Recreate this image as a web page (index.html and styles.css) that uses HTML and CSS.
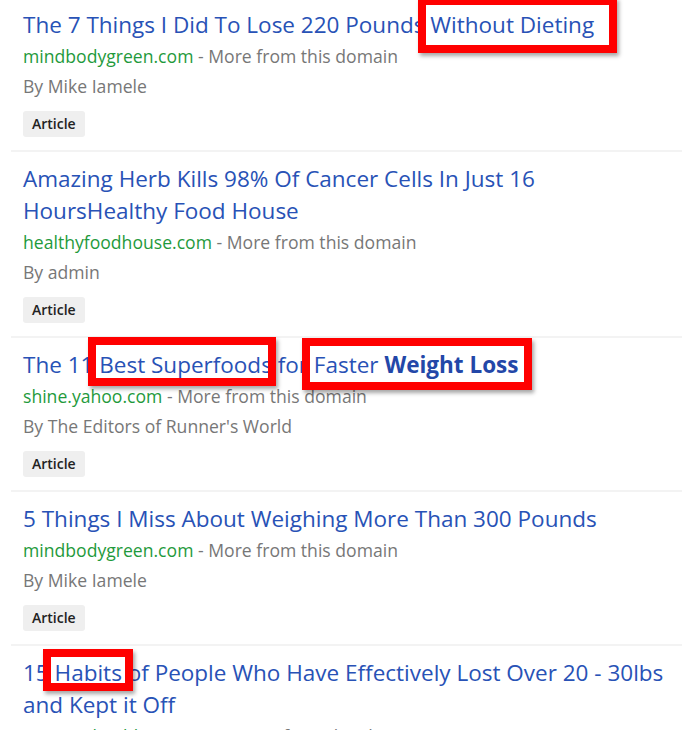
FILE: index.html
```html
<!DOCTYPE html>
<html>
<head>
<meta charset="utf-8">
<link rel="stylesheet" href="styles.css">
</head>
<body>
<div class="page">
  <ul class="results">
    <li class="item">
      <a class="title" href="#">The 7 Things I Did To Lose 220 Pounds Without Dieting</a>
      <div class="source"><span class="domain">mindbodygreen.com</span> - More from this domain</div>
      <div class="author">By Mike Iamele</div>
      <span class="badge">Article</span>
    </li>
    <li class="item">
      <a class="title" href="#">Amazing Herb Kills 98% Of Cancer Cells In Just 16 HoursHealthy Food House</a>
      <div class="source"><span class="domain">healthyfoodhouse.com</span> - More from this domain</div>
      <div class="author">By admin</div>
      <span class="badge">Article</span>
    </li>
    <li class="item">
      <a class="title" href="#">The 11 Best Superfoods for Faster <b>Weight Loss</b></a>
      <div class="source"><span class="domain">shine.yahoo.com</span> - More from this domain</div>
      <div class="author">By The Editors of Runner's World</div>
      <span class="badge">Article</span>
    </li>
    <li class="item">
      <a class="title" href="#">5 Things I Miss About Weighing More Than 300 Pounds</a>
      <div class="source"><span class="domain">mindbodygreen.com</span> - More from this domain</div>
      <div class="author">By Mike Iamele</div>
      <span class="badge">Article</span>
    </li>
    <li class="item">
      <a class="title" href="#">15 Habits of People Who Have Effectively Lost Over 20 - 30lbs and Kept it Off</a>
      <div class="source"><span class="domain">womenshealthmag.com</span> - More from this domain</div>
      <div class="author">By Women's Health</div>
      <span class="badge">Article</span>
    </li>
  </ul>
  <div class="mark mark-1"></div>
  <div class="mark mark-2"></div>
  <div class="mark mark-3"></div>
  <div class="mark mark-4"></div>
</div>
</body>
</html>
```
FILE: styles.css
```css
html, body {
  margin: 0;
  padding: 0;
  background: #ffffff;
  overflow: hidden;
}
body {
  font-family: "Open Sans", "Noto Sans", sans-serif;
  width: 682px;
  height: 730px;
}
.page {
  position: relative;
  width: 682px;
  height: 730px;
  overflow: hidden;
}
.results {
  list-style: none;
  margin: 0 0 0 11px;
  padding: 0;
}
.item {
  border-top: 2px solid #f3f3f3;
  padding: 11px 15px 13px 12px;
  display: flex;
  flex-direction: column;
  align-items: flex-start;
}
.item:first-child {
  border-top: 0;
  padding-top: 9px;
}
.title {
  font-size: 22.5px;
  line-height: 32px;
  color: #2852b6;
  text-decoration: none;
}
.title b {
  font-weight: 700;
  color: #2347a8;
}
.source {
  font-size: 17.6px;
  line-height: 30px;
  color: #777777;
}
.domain {
  color: #1f9a3c;
}
.author {
  font-size: 17.6px;
  line-height: 30px;
  color: #777777;
}
.badge {
  margin-top: 10px;
  height: 26px;
  line-height: 26px;
  padding: 0 9px;
  background: #efefef;
  border-radius: 3px;
  font-size: 14px;
  font-weight: 600;
  color: #222222;
}
.mark {
  position: absolute;
  border: 8px solid #ff0000;
  box-shadow: 2px 3px 4px rgba(0, 0, 0, 0.35);
  box-sizing: border-box;
}
.mark-1 { left: 418px; top: -3px; width: 199px; height: 56px; }
.mark-2 { left: 88px; top: 337px; width: 188px; height: 49px; }
.mark-3 { left: 302px; top: 338px; width: 230px; height: 52px; }
.mark-4 { left: 43px; top: 649px; width: 90px; height: 42px; }
```
